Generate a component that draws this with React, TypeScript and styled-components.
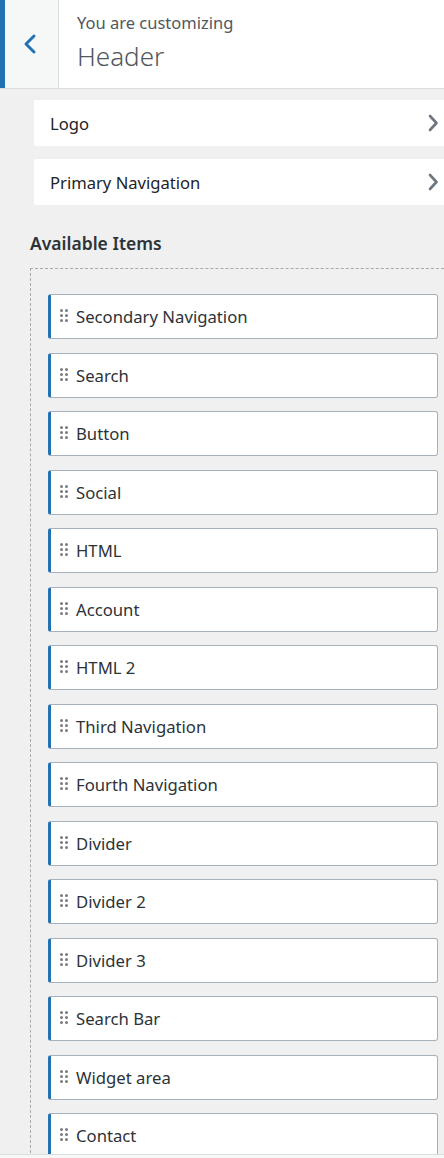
import React from 'react'
import styled, { createGlobalStyle } from 'styled-components'

const GlobalStyle = createGlobalStyle`
	html, body {
		margin: 0;
		padding: 0;
		background: #f0f0f1;
		font-family: "Noto Sans", "Open Sans", sans-serif;
		color: #1d2327;
	}
	* {
		box-sizing: border-box;
	}
`

const Panel = styled.div`
	width: 444px;
	height: 1158px;
	overflow: hidden;
	display: flex;
	flex-direction: column;
	background: #f0f0f1;
`

const Header = styled.div`
	display: flex;
	height: 89px;
	flex-shrink: 0;
	background: #fff;
	border-bottom: 1px solid #dcdcde;
`

const BackButton = styled.button`
	width: 59px;
	height: 100%;
	border: none;
	border-left: 5px solid #2271b1;
	border-right: 1px solid #dcdcde;
	background: #f6f7f7;
	display: flex;
	align-items: center;
	justify-content: center;
	padding: 0 4px 0 0;
	color: #2271b1;
`

const Title = styled.div`
	display: flex;
	flex-direction: column;
	gap: 2px;
	padding: 12px 0 0 18px;
`

const Kicker = styled.span`
	font-size: 16.5px;
	line-height: 22px;
	color: #50575e;
`

const TitleText = styled.span`
	font-size: 26px;
	line-height: 40px;
	color: #50575e;
	font-weight: 300;
`

const Body = styled.div`
	flex: 1;
	min-height: 0;
	overflow: hidden;
	display: flex;
	flex-direction: column;
	padding: 11px 0 0 30px;
	border-bottom: 1px solid #dcdcde;
`

const Footer = styled.div`
	height: 3px;
	flex-shrink: 0;
	background: #f6f7f7;
`

const SectionLink = styled.div`
	display: flex;
	align-items: center;
	justify-content: space-between;
	height: 46px;
	flex-shrink: 0;
	margin: 0 -10px 13px 4px;
	padding: 0 13px 0 16px;
	background: #fff;
	font-size: 16.6px;
	border-radius: 2px 0 0 2px;
`

const Heading = styled.h3`
	margin: 13px 0 13px;
	font-size: 17.5px;
	line-height: 24px;
	font-weight: 600;
	color: #2c3338;
`

const DropZone = styled.div`
	flex: 1;
	margin-right: -20px;
	border-left: 1px dashed #a7aaad;
	border-top: 1px dashed #a7aaad;
	padding: 25px 26px 0 17px;
	display: flex;
	flex-direction: column;
	gap: 13.5px;
`

const Item = styled.div`
	display: flex;
	align-items: center;
	gap: 8px;
	height: 45px;
	flex-shrink: 0;
	padding-left: 9px;
	background: #fff;
	border: 1px solid #a7b0bd;
	border-left: 3px solid #2271b1;
	border-radius: 3px;
	font-size: 16.7px;
	color: #2c3338;
`

const Handle = styled.span`
	display: grid;
	grid-template-columns: 3px 3px;
	gap: 2px;
	margin-top: -2px;

	i {
		width: 3px;
		height: 3px;
		border-radius: 50%;
		background: #787c82;
	}
`

const Chevron = ({ left }: { left?: boolean }) => (
	<svg width="16" height="22" viewBox="0 0 16 22" fill="none">
		<path
			d={left ? 'M12 3 L4 11 L12 19' : 'M5 4 L11.5 11 L5 18'}
			stroke="currentColor"
			strokeWidth={left ? 3 : 2.6}
			strokeLinecap="round"
			strokeLinejoin="round"
		/>
	</svg>
)

const Arrow = styled.span`
	color: #6c7781;
	display: flex;
`

const items = [
	'Secondary Navigation',
	'Search',
	'Button',
	'Social',
	'HTML',
	'Account',
	'HTML 2',
	'Third Navigation',
	'Fourth Navigation',
	'Divider',
	'Divider 2',
	'Divider 3',
	'Search Bar',
	'Widget area',
	'Contact',
]

const App = () => {
	return (
		<Panel>
			<GlobalStyle />
			<Header>
				<BackButton>
					<Chevron left />
				</BackButton>
				<Title>
					<Kicker>You are customizing</Kicker>
					<TitleText>Header</TitleText>
				</Title>
			</Header>
			<Body>
				<SectionLink>
					Logo
					<Arrow>
						<Chevron />
					</Arrow>
				</SectionLink>
				<SectionLink>
					Primary Navigation
					<Arrow>
						<Chevron />
					</Arrow>
				</SectionLink>
				<Heading>Available Items</Heading>
				<DropZone>
					{items.map((name) => (
						<Item key={name}>
							<Handle>
								{[0, 1, 2, 3, 4, 5].map((i) => (
									<i key={i} />
								))}
							</Handle>
							{name}
						</Item>
					))}
				</DropZone>
			</Body>
			<Footer />
		</Panel>
	)
}

export default App
